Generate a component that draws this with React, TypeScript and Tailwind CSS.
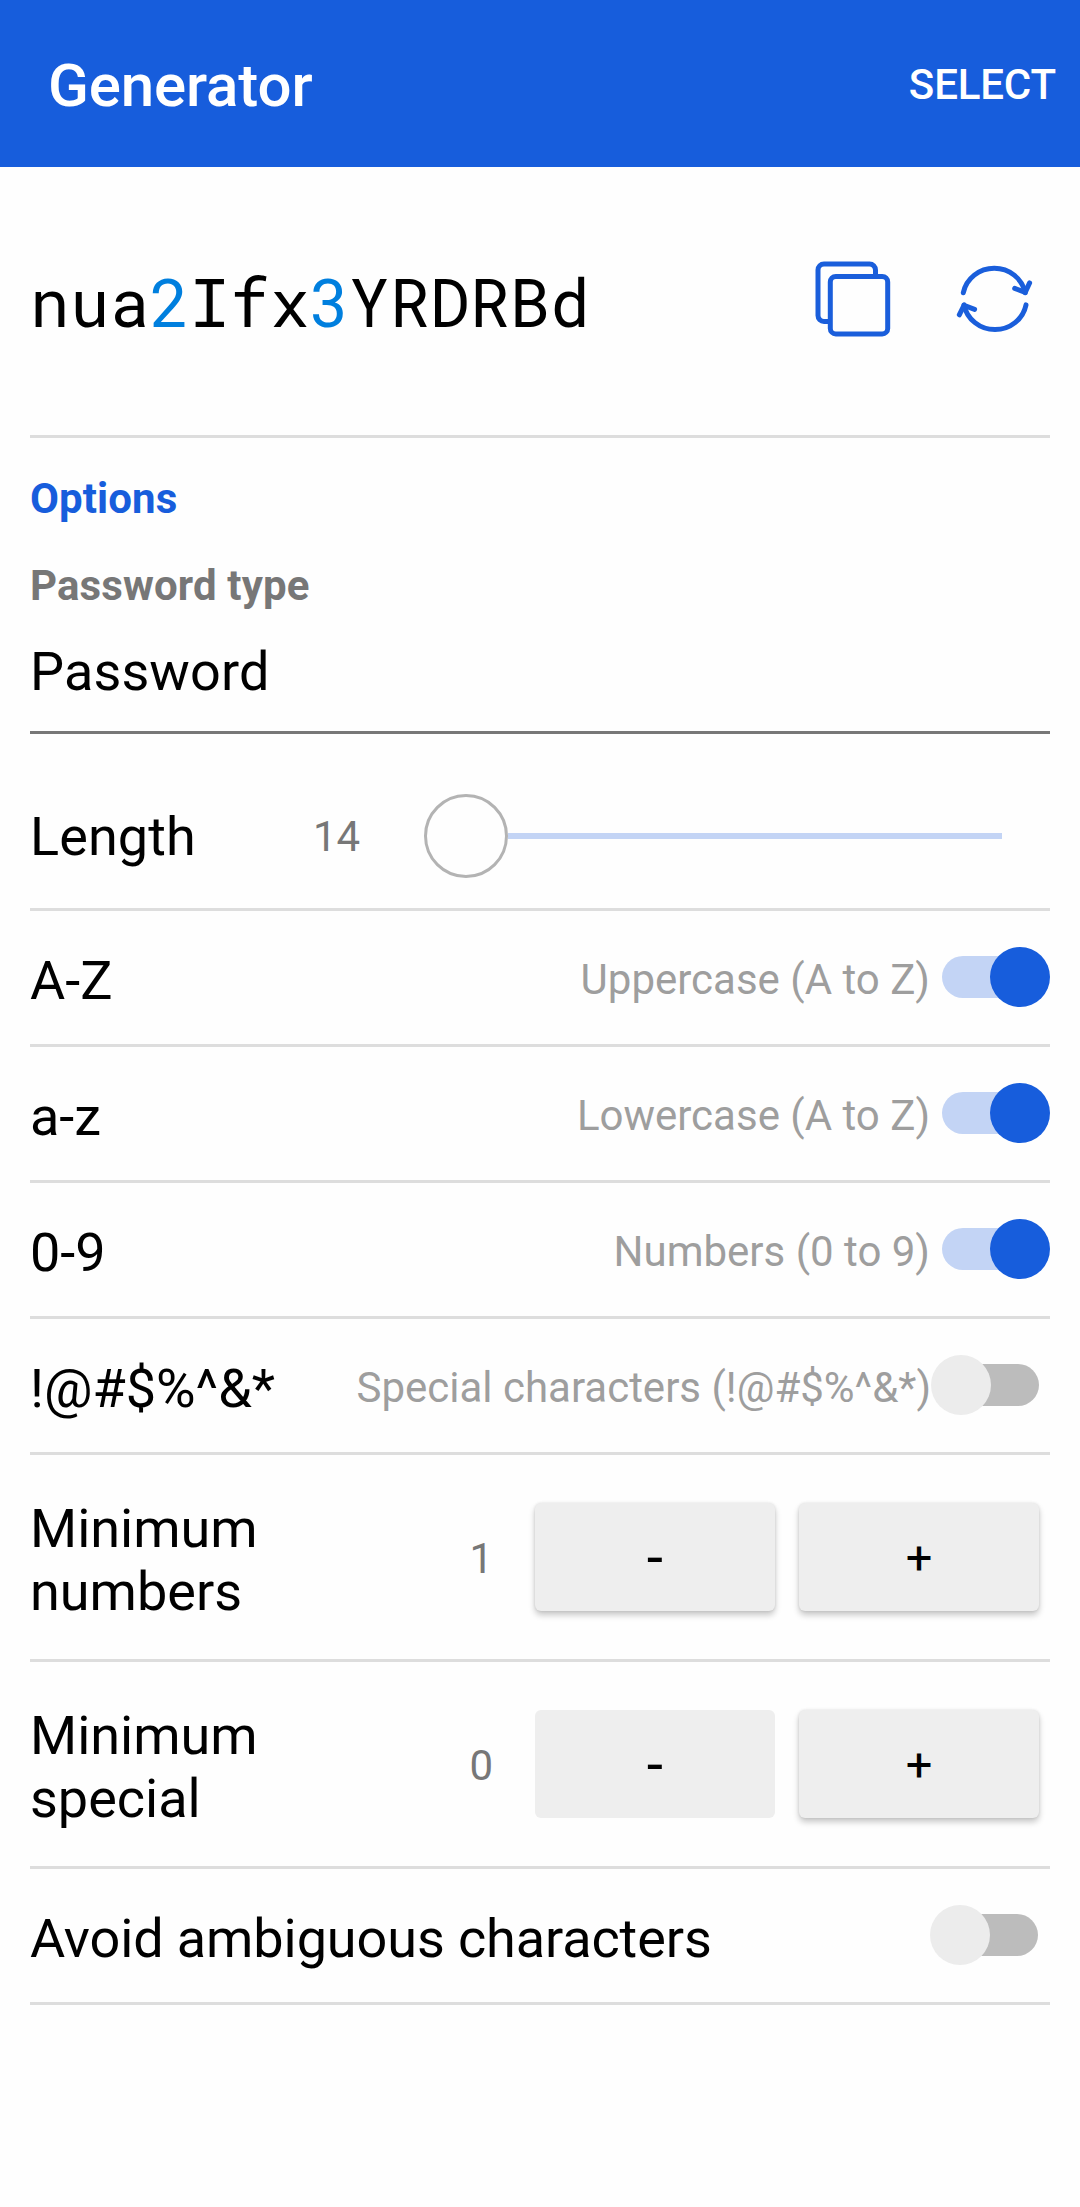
import { Fragment, type ReactNode } from 'react';

function CopyIcon() {
  return (
    <svg width="76" height="76" viewBox="0 0 76 76" fill="none" stroke="#1a5edb" strokeWidth="5">
      <path d="M60.5 15V9a6 6 0 0 0-6-6H9a6 6 0 0 0-6 6v45.5a6 6 0 0 0 6 6h6" />
      <rect x="15.3" y="15.5" width="57.4" height="57.4" rx="5.5" />
    </svg>
  );
}

function RefreshIcon() {
  return (
    <svg width="77" height="68" viewBox="0 0 77 68" fill="none" stroke="#1a5edb" strokeWidth="5" strokeLinecap="round" strokeLinejoin="round">
      <path d="M7.3 27.7A31.6 30.6 0 0 1 69.2 27.7" />
      <path d="M58.7 23.4L69.2 27.4L73.6 17.9" />
      <path d="M70 39.9A31.6 30.6 0 0 1 8 39.9" />
      <path d="M18.6 44.3L8 40.3L3.3 49.8" />
    </svg>
  );
}

function Divider() {
  return <div className="h-[3px] bg-[#dddddd]" />;
}

function Label({ children }: { children: ReactNode }) {
  return <div className="text-[54px] leading-[63px] text-black">{children}</div>;
}

function Switch({ on, wide }: { on: boolean; wide: boolean }) {
  return (
    <div className={wide ? 'mt-9 h-[60px] w-[120px]' : 'mt-9 h-[60px] w-[119px]'}>
      {on ? (
        <div className="ml-3 flex h-[60px] w-[108px] items-center">
          <div className="h-[42px] w-[78px] rounded-l-full bg-[#c3d4f5]" />
          <div className="-ml-[30px] size-[60px] rounded-full bg-[#175ddc]" />
        </div>
      ) : (
        <div className="flex h-[60px] w-[108px] items-center">
          <div className="z-10 size-[60px] rounded-full bg-[#ececec]" />
          <div className="-ml-[30px] h-[42px] w-[78px] rounded-r-full bg-[#bcbcbc]" />
        </div>
      )}
    </div>
  );
}

const toggles = [
  { label: 'A-Z', hint: 'Uppercase (A to Z)', on: true },
  { label: 'a-z', hint: 'Lowercase (A to Z)', on: true },
  { label: '0-9', hint: 'Numbers (0 to 9)', on: true },
  { label: '!@#$%^&*', hint: 'Special characters (!@#$%^&*)', on: false },
];

const steppers = [
  { label: ['Minimum', 'numbers'], value: 1 },
  { label: ['Minimum', 'special'], value: 0 },
];

function StepButton({ sign, raised }: { sign: string; raised: boolean }) {
  return (
    <button
      className={
        'mt-12 flex h-[108px] w-60 items-start justify-center rounded-[6px] bg-[#eeeeee] pt-[26px] text-[47px] leading-[57px] text-black ' +
        (raised ? 'shadow-[0_4px_6px_rgba(0,0,0,0.22),0_0_3px_rgba(0,0,0,0.10)]' : '')
      }
    >
      <span className={sign === '-' ? 'scale-x-115 font-medium' : ''}>{sign}</span>
    </button>
  );
}

export default function App() {
  return (
    <div className="min-h-[2207px] w-[1080px] bg-[#fefefe] font-['Roboto',sans-serif]">
      <header className="flex h-[167px] items-start justify-between bg-[#175ddc] pl-12 pr-[24px] text-white">
        <h1 className="mt-[50px] text-[60px] font-medium leading-[71px] tracking-[-0.12px]">Generator</h1>
        <button className="mt-[60px] text-[42px] font-medium leading-[49px] tracking-[-0.14px]">SELECT</button>
      </header>

      <main className="px-[30px]">
        <section className="flex h-[268px] items-start">
          <div className="mt-[91px] flex-1 font-['Roboto_Mono',monospace] text-[66px] leading-[87px] tracking-[0.4px] text-black">
            nua<span className="text-[#007fde]">2</span>Ifx<span className="text-[#007fde]">3</span>YRDRBd
          </div>
          <button className="mt-[94px]"><CopyIcon /></button>
          <button className="ml-[65px] mr-[17px] mt-[98px]"><RefreshIcon /></button>
        </section>
        <Divider />

        <h2 className="mt-9 text-[42px] font-bold leading-[49px] tracking-[0.1px] text-[#175ddc]">Options</h2>
        <div className="mt-[38px] text-[42px] font-bold leading-[49px] tracking-[0.14px] text-[#777777]">Password type</div>
        <div className="mt-[30px] pb-7 tracking-[0.12px]"><Label>Password</Label></div>
        <div className="h-[3px] bg-[#777777]" />

        <section className="flex h-[174px] items-start">
          <div className="mt-[71px] w-[283px] tracking-[0.1px]"><Label>Length</Label></div>
          <div className="mt-[78px] w-[111px] text-[42px] leading-[49px] text-[#777777]">14</div>
          <div className="mt-[60px] flex h-[84px] w-[578px] items-center">
            <div className="size-[84px] rounded-full border-[3px] border-[#b3b3b3]" />
            <div className="h-[6px] flex-1 bg-[#c3d4f5]" />
          </div>
        </section>
        <Divider />

        {toggles.map((t) => (
          <Fragment key={t.label}>
            <section className="flex h-[133px] items-start">
              <div className="mt-[38px]"><Label>{t.label}</Label></div>
              <div className="mt-11 flex-1 whitespace-nowrap text-right text-[42px] leading-[49px] text-[#9e9e9e]">{t.hint}</div>
              <Switch on={t.on} wide={t.on} />
            </section>
            <Divider />
          </Fragment>
        ))}

        {steppers.map((s) => (
          <Fragment key={s.label[1]}>
            <section className="flex h-[204px] items-start">
              <div className="mt-[42px] flex-1">
                {s.label.map((line) => <Label key={line}>{line}</Label>)}
              </div>
              <div className="mr-[42px] mt-[79px] text-[42px] leading-[49px] text-[#777777]">{s.value}</div>
              <StepButton sign="-" raised={s.value > 0} />
              <div className="ml-6 mr-[11px]"><StepButton sign="+" raised /></div>
            </section>
            <Divider />
          </Fragment>
        ))}

        <section className="flex h-[133px] items-start">
          <div className="mt-[38px] flex-1 tracking-[-0.1px]"><Label>Avoid ambiguous characters</Label></div>
          <Switch on={false} wide />
        </section>
        <Divider />
      </main>
    </div>
  );
}
